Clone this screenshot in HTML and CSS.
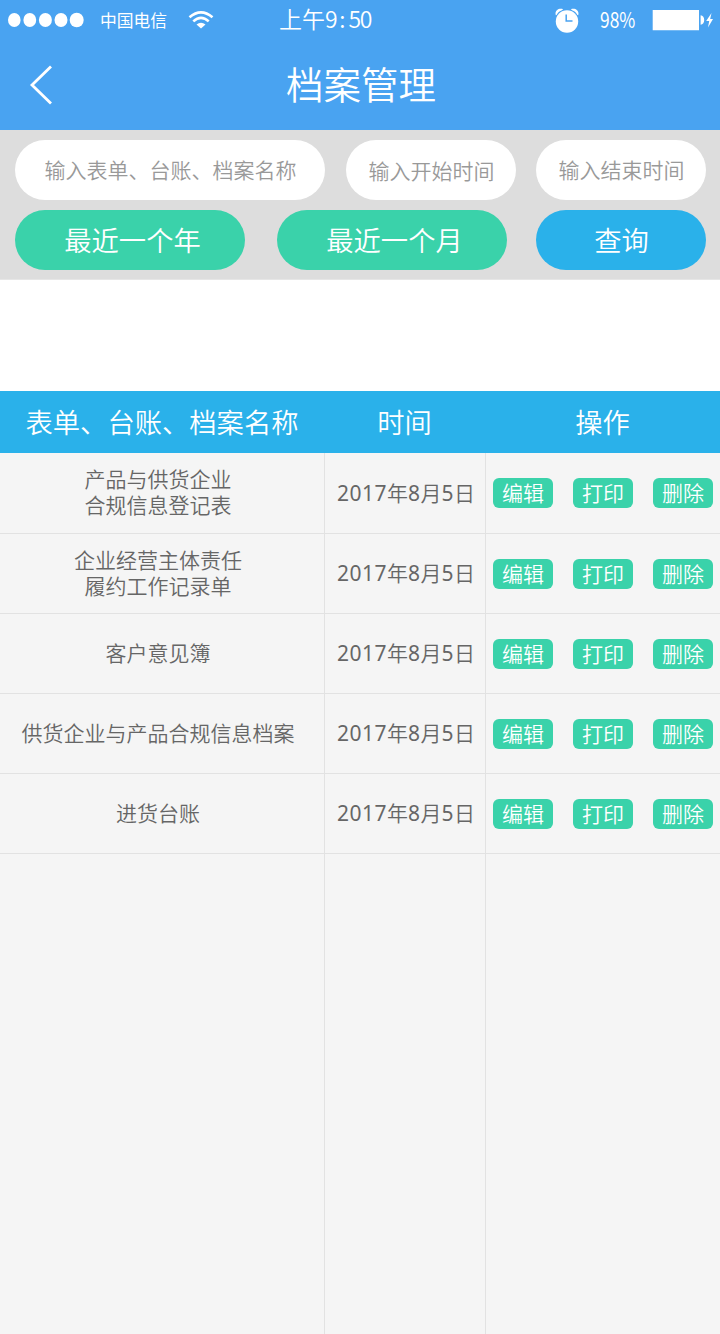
FILE: index.html
```
<!DOCTYPE html>
<html lang="zh-CN">
<head>
<meta charset="utf-8">
<title>档案管理</title>
<link rel="stylesheet" href="styles.css">
</head>
<body>
<header class="top">
  <div class="status">
    <svg class="signal" width="77" height="16" viewBox="0 0 77 16" fill="#fff"><ellipse cx="6.3" cy="8" rx="6.3" ry="7"/><ellipse cx="21.8" cy="8" rx="6.4" ry="7"/><ellipse cx="37.4" cy="8" rx="6.5" ry="7"/><ellipse cx="53" cy="8" rx="6.5" ry="7"/><ellipse cx="68.7" cy="8" rx="7" ry="7.3"/></svg>
    <span class="carrier">中国电信</span>
    <svg class="wifi" width="26" height="20" viewBox="0 0 26 20" fill="none" stroke="#fff" stroke-width="2.6"><path d="M1.5 7.3Q13-2.600 24.500 7.300"/><path d="M5.300 11.400Q13 4.200 20.700 11.400"/><path d="M8.500 14.500Q13 11 17.500 14.500L13 18.600Z" fill="#fff" stroke="none"/></svg>
    <span class="clock"><span>上午</span><span class="digits">9</span><span class="colon">:</span><span class="digits">50</span></span>
    <svg class="alarm" width="24" height="25" viewBox="0 0 24 25" fill="#fff"><circle cx="12" cy="13.500" r="11.200"/><path d="M.8 7.200C-.6 3 3.500-.6 8.200 1.200L6.500 2.400C4 3.300 2.600 4.700 1.800 6.800zM23.200 7.200C24.600 3 20.500-.6 15.800 1.200L17.500 2.400C20 3.300 21.400 4.700 22.200 6.800z"/><path d="M11.200 6.500V13H17.500" fill="none" stroke="#49a3f1" stroke-width="1.500"/></svg>
    <span class="percent">98%</span>
    <svg class="battery" width="62" height="22" viewBox="0 0 62 22" fill="#fff"><path d="M.7 1H47V21.200H.7zM48.600 6.200Q52.200 7 52.200 11T48.600 15.800zM59.500 4L54.200 12H57.200L56 18.500L61 10H58.200z"/></svg>
  </div>
  <div class="nav">
    <svg class="back" width="24" height="42" viewBox="0 0 24 42" fill="none" stroke="#fff" stroke-width="2.800"><path d="M22 2.500L3 21L22 39.500"/></svg>
    <h1 class="title">档案管理</h1>
  </div>
</header>
<section class="filters">
  <input class="field name" aria-label="名称" placeholder="输入表单、台账、档案名称">
  <input class="field start" aria-label="开始时间" placeholder="输入开始时间">
  <input class="field end" aria-label="结束时间" placeholder="输入结束时间">
  <div class="actions">
    <button class="pill">最近一个年</button>
    <button class="pill">最近一个月</button>
    <button class="pill query">查询</button>
  </div>
</section>
<main class="table">
  <div class="head"><span class="h-name">表单、台账、档案名称</span><span class="h-date">时间</span><span class="h-ops">操作</span></div>
  <div class="row first"><div class="cell item">产品与供货企业<br>合规信息登记表</div><div class="cell date"><span><span class="num">2017</span>年<span class="num">8</span>月<span class="num">5</span>日</span></div><div class="ops"><button class="tag">编辑</button><button class="tag">打印</button><button class="tag">删除</button></div></div>
  <div class="row"><div class="cell item">企业经营主体责任<br>履约工作记录单</div><div class="cell date"><span><span class="num">2017</span>年<span class="num">8</span>月<span class="num">5</span>日</span></div><div class="ops"><button class="tag">编辑</button><button class="tag">打印</button><button class="tag">删除</button></div></div>
  <div class="row"><div class="cell item">客户意见簿</div><div class="cell date"><span><span class="num">2017</span>年<span class="num">8</span>月<span class="num">5</span>日</span></div><div class="ops"><button class="tag">编辑</button><button class="tag">打印</button><button class="tag">删除</button></div></div>
  <div class="row"><div class="cell item">供货企业与产品合规信息档案</div><div class="cell date"><span><span class="num">2017</span>年<span class="num">8</span>月<span class="num">5</span>日</span></div><div class="ops"><button class="tag">编辑</button><button class="tag">打印</button><button class="tag">删除</button></div></div>
  <div class="row"><div class="cell item">进货台账</div><div class="cell date"><span><span class="num">2017</span>年<span class="num">8</span>月<span class="num">5</span>日</span></div><div class="ops"><button class="tag">编辑</button><button class="tag">打印</button><button class="tag">删除</button></div></div>
  <div class="row rest"><div class="cell item"></div><div class="cell date"></div><div class="ops"></div></div>
</main>
</body>
</html>
```
FILE: styles.css
```
* { box-sizing: border-box; }
body {
  margin: 0;
  width: 720px;
  height: 1334px;
  display: flex;
  flex-direction: column;
  background: #fff;
  font-family: "Noto Sans CJK SC", sans-serif;
  font-weight: 350;
  overflow: hidden;
}
button, input { font: inherit; border: 0; margin: 0; padding: 0; }
.top { height: 130px; background: #49a3f1; color: #fff; }
.status { height: 40px; display: flex; align-items: center; padding-left: 8px; white-space: nowrap; }
.status svg { flex: none; }
.carrier { width: 68px; margin-left: 15px; font-size: 16.8px; font-weight: 400; line-height: 40px; }
.wifi { margin-left: 20px; }
.clock { display: flex; width: 96px; margin-left: 65px; font-size: 23px; line-height: 37px; height: 40px; }
.digits { letter-spacing: -1.2px; }
.colon { width: 12px; text-align: center; }
.alarm { margin-left: 180px; }
.percent { width: 36px; margin-left: 21px; font-size: 22px; line-height: 36px; height: 40px; transform: scaleX(.79); transform-origin: left; font-weight: 400; }
.battery { margin-left: 16px; }
.nav { height: 90px; display: grid; grid-template-columns: 60px 1fr 58px; align-items: center; }
.back { margin-left: 29px; }
.title { margin: 0; height: 90px; font-size: 37.5px; line-height: 85px; font-weight: 350; text-align: center; }
.filters {
  height: 150px;
  padding: 10px 14px 0 15px;
  display: grid;
  grid-template-columns: 310px 170px 170px;
  grid-template-rows: 60px 60px;
  column-gap: 20px;
  row-gap: 10px;
  justify-content: space-between;
  background: #ddd;
  border-bottom: 1px solid #e6e6e6;
}
.field { width: 100%; border-radius: 30px; background: #fff; font-size: 21px; text-align: center; }
.name { padding: 0 0 2px 1px; }
.start { padding: 0 0 0 2px; }
.end { padding: 0 0 2px 1px; }
.field::placeholder { color: #999; opacity: 1; }
.actions { grid-column: 1 / -1; display: grid; grid-template-columns: 262px 259px 170px; }
.pill { width: 230px; border-radius: 30px; background: #3ad2aa; color: #fff; font-size: 27.3px; padding: 0 0 2px 5px; }
.query { width: 170px; background: #2ab1ea; padding-left: 1px; }
.table { flex: 1; margin-top: 111px; display: flex; flex-direction: column; background: #f5f5f5; }
.head { height: 62px; display: grid; grid-template-columns: 324px 161px 235px; background: #2ab1ea; color: #fff; font-size: 27.3px; line-height: 61px; text-align: center; }
.row { height: 80px; display: grid; grid-template-columns: 325px 161px 234px; border-bottom: 1px solid #e2e2e2; color: #666; font-size: 21px; line-height: 26px; }
.first { height: 81px; }
.rest { flex: 1; border: 0; }
.cell { display: flex; align-items: center; justify-content: center; text-align: center; border-right: 1px solid #e2e2e2; }
.item { padding-right: 8px; font-family: "Liberation Sans", "Noto Sans CJK SC", sans-serif; }
.date { padding: 0 0 3px 2px; }
.first .date { padding-bottom: 2px; }
.num { font-family: "Noto Sans", sans-serif; font-weight: 400; letter-spacing: .5px; }
.ops { display: flex; gap: 20px; padding: 25px 0 0 7px; }
.tag { width: 60px; height: 30px; border-radius: 6px; background: #3ad2aa; color: #fff; font-size: 21px; line-height: 28px; padding-bottom: 2px; }
```
